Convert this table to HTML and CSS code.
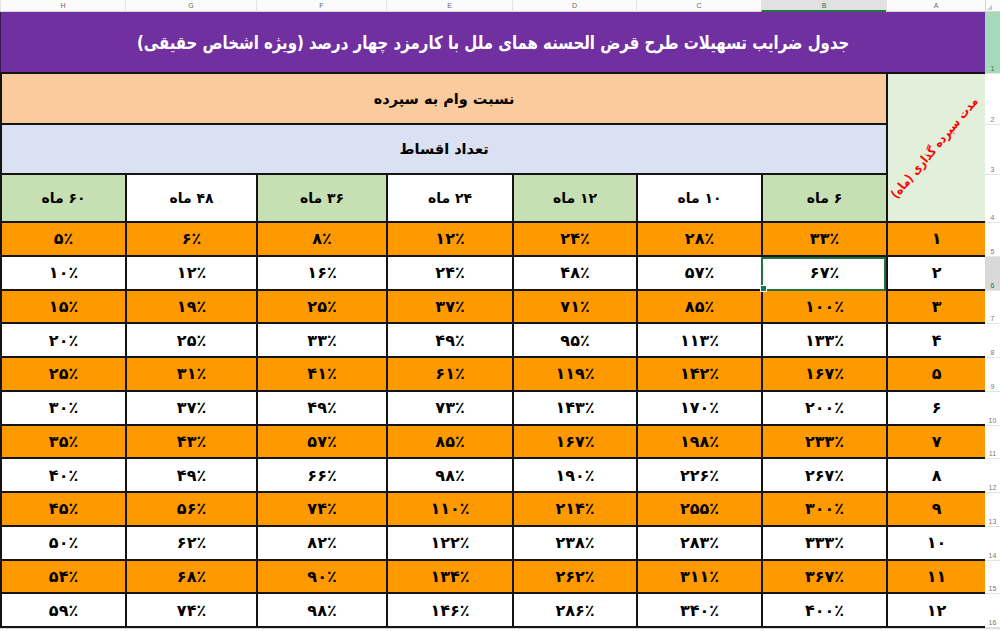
FILE: index.html
```html
<!DOCTYPE html>
<html lang="fa" dir="rtl">
<head>
<meta charset="utf-8">
<title>جدول ضرایب تسهیلات</title>
<link rel="stylesheet" href="styles.css">
</head>
<body>
<div class="sheet">
  <div class="ch corner"><svg width="7" height="7" viewBox="0 0 7 7"><path d="M1 6 L6 1 L6 6 Z" fill="#c8c8c8"/></svg></div>
  <div class="ch">A</div>
  <div class="ch ch-sel">B</div>
  <div class="ch">C</div>
  <div class="ch">D</div>
  <div class="ch">E</div>
  <div class="ch">F</div>
  <div class="ch">G</div>
  <div class="ch">H</div>

  <div class="rh rh-first">1</div>
  <div class="title"><span class="title-text">جدول ضرایب تسهیلات طرح قرض الحسنه همای ملل با کارمزد چهار درصد (ویژه اشخاص حقیقی)</span></div>

  <div class="rh">2</div>
  <div class="cell depo"><span class="depo-text">مدت سپرده گذاری (ماه)</span></div>
  <div class="cell ratio">نسبت وام به سپرده</div>

  <div class="rh">3</div>
  <div class="cell installs">تعداد اقساط</div>

  <div class="rh">4</div>
  <div class="cell hdr green">۶ ماه</div>
  <div class="cell hdr">۱۰ ماه</div>
  <div class="cell hdr green">۱۲ ماه</div>
  <div class="cell hdr">۲۴ ماه</div>
  <div class="cell hdr green">۳۶ ماه</div>
  <div class="cell hdr">۴۸ ماه</div>
  <div class="cell hdr green">۶۰ ماه</div>

  <div class="row odd"><div class="rh">5</div><div class="cell">۱</div><div class="cell">۳۳٪</div><div class="cell">۲۸٪</div><div class="cell">۲۴٪</div><div class="cell">۱۲٪</div><div class="cell">۸٪</div><div class="cell">۶٪</div><div class="cell">۵٪</div></div>
  <div class="row even"><div class="rh rh-sel">6</div><div class="cell">۲</div><div class="cell sel">۶۷٪</div><div class="cell">۵۷٪</div><div class="cell">۴۸٪</div><div class="cell">۲۴٪</div><div class="cell">۱۶٪</div><div class="cell">۱۲٪</div><div class="cell">۱۰٪</div></div>
  <div class="row odd"><div class="rh">7</div><div class="cell">۳</div><div class="cell">۱۰۰٪</div><div class="cell">۸۵٪</div><div class="cell">۷۱٪</div><div class="cell">۳۷٪</div><div class="cell">۲۵٪</div><div class="cell">۱۹٪</div><div class="cell">۱۵٪</div></div>
  <div class="row even"><div class="rh">8</div><div class="cell">۴</div><div class="cell">۱۳۳٪</div><div class="cell">۱۱۳٪</div><div class="cell">۹۵٪</div><div class="cell">۴۹٪</div><div class="cell">۳۳٪</div><div class="cell">۲۵٪</div><div class="cell">۲۰٪</div></div>
  <div class="row odd"><div class="rh">9</div><div class="cell">۵</div><div class="cell">۱۶۷٪</div><div class="cell">۱۴۲٪</div><div class="cell">۱۱۹٪</div><div class="cell">۶۱٪</div><div class="cell">۴۱٪</div><div class="cell">۳۱٪</div><div class="cell">۲۵٪</div></div>
  <div class="row even"><div class="rh">10</div><div class="cell">۶</div><div class="cell">۲۰۰٪</div><div class="cell">۱۷۰٪</div><div class="cell">۱۴۳٪</div><div class="cell">۷۳٪</div><div class="cell">۴۹٪</div><div class="cell">۳۷٪</div><div class="cell">۳۰٪</div></div>
  <div class="row odd"><div class="rh">11</div><div class="cell">۷</div><div class="cell">۲۳۳٪</div><div class="cell">۱۹۸٪</div><div class="cell">۱۶۷٪</div><div class="cell">۸۵٪</div><div class="cell">۵۷٪</div><div class="cell">۴۳٪</div><div class="cell">۳۵٪</div></div>
  <div class="row even"><div class="rh">12</div><div class="cell">۸</div><div class="cell">۲۶۷٪</div><div class="cell">۲۲۶٪</div><div class="cell">۱۹۰٪</div><div class="cell">۹۸٪</div><div class="cell">۶۶٪</div><div class="cell">۴۹٪</div><div class="cell">۴۰٪</div></div>
  <div class="row odd"><div class="rh">13</div><div class="cell">۹</div><div class="cell">۳۰۰٪</div><div class="cell">۲۵۵٪</div><div class="cell">۲۱۴٪</div><div class="cell">۱۱۰٪</div><div class="cell">۷۴٪</div><div class="cell">۵۶٪</div><div class="cell">۴۵٪</div></div>
  <div class="row even"><div class="rh">14</div><div class="cell">۱۰</div><div class="cell">۳۳۳٪</div><div class="cell">۲۸۳٪</div><div class="cell">۲۳۸٪</div><div class="cell">۱۲۲٪</div><div class="cell">۸۲٪</div><div class="cell">۶۲٪</div><div class="cell">۵۰٪</div></div>
  <div class="row odd"><div class="rh">15</div><div class="cell">۱۱</div><div class="cell">۳۶۷٪</div><div class="cell">۳۱۱٪</div><div class="cell">۲۶۲٪</div><div class="cell">۱۳۴٪</div><div class="cell">۹۰٪</div><div class="cell">۶۸٪</div><div class="cell">۵۴٪</div></div>
  <div class="row even"><div class="rh">16</div><div class="cell">۱۲</div><div class="cell">۴۰۰٪</div><div class="cell">۳۴۰٪</div><div class="cell">۲۸۶٪</div><div class="cell">۱۴۶٪</div><div class="cell">۹۸٪</div><div class="cell">۷۴٪</div><div class="cell">۵۹٪</div></div>
</div>
</body>
</html>
```

FILE: styles.css
```css
html, body {
  margin: 0;
  padding: 0;
}

body {
  width: 1000px;
  height: 631px;
  overflow: hidden;
  background: #ffffff;
  font-family: "DejaVu Sans", "Noto Sans", sans-serif;
}

.sheet {
  display: grid;
  grid-template-columns: 15px 99px 125px 125px 124px 126px 130px 131px 125px;
  grid-template-rows: 12px 62px 51px 50px 48px repeat(12, 33.75px);
  border-bottom: 1px solid #d8d8d8;
  width: 1000px;
}

/* Column letters */
.ch {
  box-sizing: border-box;
  display: flex;
  align-items: center;
  justify-content: center;
  font-family: "Liberation Sans", Arial, sans-serif;
  font-size: 7px;
  color: #666;
  background: #fbfbfb;
  border-left: 1px solid #e2e2e2;
  border-bottom: 1px solid #d6d6d6;
}

.ch-sel {
  background: #e1e1e1;
  color: #217346;
  border-bottom: 2px solid #217346;
}

.corner {
  align-items: flex-end;
  justify-content: flex-end;
  border-left: 1px solid #d6d6d6;
}

/* Row numbers */
.rh {
  box-sizing: border-box;
  display: flex;
  align-items: flex-end;
  justify-content: center;
  padding-bottom: 1px;
  font-family: "Liberation Sans", Arial, sans-serif;
  font-size: 7px;
  color: #777;
  background: #ffffff;
  border-bottom: 1px solid #e4e4e4;
}

.rh-first {
  background: #a4d9ba;
  color: #3f7a57;
}

.rh-sel {
  background: #d9d9d9;
  color: #217346;
}

/* Title */
.title {
  grid-column: 2 / span 8;
  box-sizing: border-box;
  display: flex;
  align-items: center;
  justify-content: center;
  background: #7030a0;
  color: #ffffff;
  font-weight: bold;
  border-bottom: 2px solid #141414;
  border-left: 1px solid #3a1a55;
}

.title-text {
  display: block;
  font-size: 18px;
  white-space: nowrap;
  transform: scaleX(0.83);
}

/* Generic cells */
.cell {
  box-sizing: border-box;
  display: flex;
  align-items: center;
  justify-content: center;
  border-left: 2px solid #141414;
  border-bottom: 2px solid #141414;
  font-weight: bold;
  font-size: 16px;
  color: #000;
  white-space: nowrap;
}

.ratio {
  grid-column: 3 / span 7;
  background: #facb9c;
  font-size: 14.5px;
}

.installs {
  grid-column: 3 / span 7;
  background: #d9e1f2;
  font-size: 14.5px;
}

.depo {
  grid-column: 2;
  grid-row: 3 / span 3;
  background: #e2efda;
  overflow: hidden;
}

.depo-text {
  display: block;
  flex: none;
  color: #ff0000;
  font-size: 12.5px;
  margin-right: 4px;
  transform: rotate(-50deg) scaleX(0.86);
}

.hdr {
  background: #ffffff;
  font-size: 14px;
}

.hdr.green {
  background: #c6e0b4;
}

/* Data rows */
.row {
  display: contents;
}

.odd > .cell {
  background: #ff9900;
}

.even > .cell {
  background: #ffffff;
}

.sel {
  position: relative;
  outline: 2px solid #217346;
  outline-offset: -2px;
}

.sel::after {
  content: "";
  position: absolute;
  left: -3px;
  bottom: -3px;
  width: 5px;
  height: 5px;
  background: #217346;
  border: 1px solid #ffffff;
}
```
